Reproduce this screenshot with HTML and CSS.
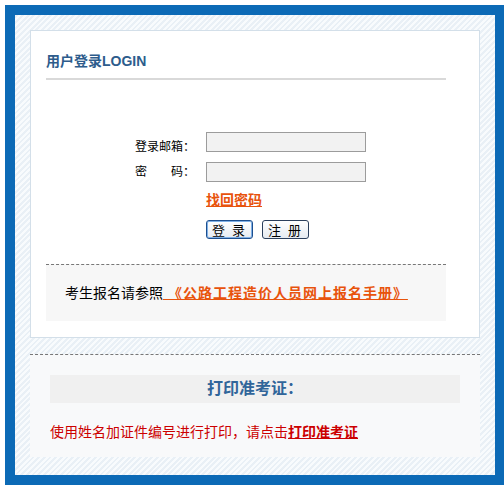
FILE: index.html
```html
<!DOCTYPE html>
<html lang="zh-CN">
<head>
    <meta charset="UTF-8">
    <title>用户登录</title>
    <link rel="stylesheet" href="styles.css">
</head>
<body>
    <div class="frame">
        <div class="login-panel">
            <h2 class="panel-title">用户登录LOGIN</h2>

            <form class="login-form" onsubmit="return false;">
                <label for="email">登录邮箱：</label>
                <input type="text" id="email">
                <label for="pwd">密　　码：</label>
                <input type="password" id="pwd">
                <span></span>
                <a href="#" class="find-pwd">找回密码</a>
                <span></span>
                <div class="btns">
                    <button class="btn btn-focus">登&nbsp;录</button>
                    <button class="btn">注&nbsp;册</button>
                </div>
            </form>

            <div class="notice">
                考生报名请参照<a href="#" class="manual"> 《公路工程造价人员网上报名手册》 </a>
            </div>
        </div>

        <div class="print-box">
            <div class="print-title">打印准考证：</div>
            <p class="print-tip">使用姓名加证件编号进行打印，请点击<a href="#">打印准考证</a></p>
        </div>
    </div>
</body>
</html>
```

FILE: styles.css
```css
html,
body {
    margin: 0;
    padding: 0;
    overflow: hidden;
    background: #fff;
}

body {
    font-family: "Liberation Sans", "Noto Sans CJK SC", sans-serif;
    font-size: 12px;
    color: #000;
}

.frame {
    margin: 5px 0 0 5px;
    width: 450px;
    border: 10px solid #0c6ab6;
    padding: 15px 15px 18px 15px;
    background: repeating-linear-gradient(-45deg, #f8fbfd 0, #f8fbfd 2px, #e9f0f6 2px, #e9f0f6 4px);
}

.login-panel {
    background: #fff;
    border: 1px solid #d3dfe9;
    padding: 22px 15px 16px 15px;
}

.panel-title {
    margin: 0;
    width: 400px;
    font-size: 14px;
    line-height: 16px;
    padding-bottom: 9px;
    color: #2d5c8c;
    border-bottom: 2px solid #d9d9d9;
}

.login-form {
    display: grid;
    grid-template-columns: 149px 160px;
    column-gap: 11px;
    margin-top: 52px;
    align-items: center;
}

.login-form label {
    text-align: right;
    font-size: 12px;
    line-height: 20px;
}

.login-form input {
    box-sizing: border-box;
    width: 160px;
    height: 20px;
    margin: 0;
    border: 1px solid #9c9c9c;
    background: #f2f2f2;
    outline: none;
}

#email {
    margin-bottom: 10px;
}

.find-pwd {
    justify-self: start;
    margin-top: 8px;
    font-size: 14px;
    font-weight: bold;
    line-height: 20px;
    color: #e8530c;
}

.btns {
    display: flex;
    gap: 9px;
    margin-top: 10px;
}

.btn {
    width: 47px;
    height: 19px;
    padding: 0;
    font-family: "Noto Sans CJK SC", sans-serif;
    font-size: 13px;
    line-height: 15px;
    letter-spacing: 2px;
    border: 1px solid #2b3f5c;
    border-radius: 3px;
    background: linear-gradient(#ffffff, #e6ebf1);
    cursor: pointer;
}

.btn-focus {
    border-color: #1d4f8f;
    box-shadow: inset 0 0 0 1px #7fb0e6;
}

.notice {
    margin-top: 25px;
    width: 381px;
    padding-left: 19px;
    border-top: 1px dashed #777;
    background: #f7f7f7;
    font-size: 14px;
    line-height: 56px;
}

.manual {
    color: #e8530c;
    font-weight: bold;
    letter-spacing: 1px;
}

.print-box {
    margin-top: 16px;
    border-top: 1px dashed #777;
    background: #f8f9fa;
    padding: 20px 20px 15px 20px;
}

.print-title {
    background: #f0f0f0;
    text-align: center;
    font-size: 16px;
    font-weight: bold;
    line-height: 28px;
    color: #30659a;
}

.print-tip {
    margin: 19px 0 0 0;
    font-size: 14px;
    line-height: 20px;
    color: #cc0000;
}

.print-tip a {
    color: #cc0000;
    font-weight: bold;
}
```
